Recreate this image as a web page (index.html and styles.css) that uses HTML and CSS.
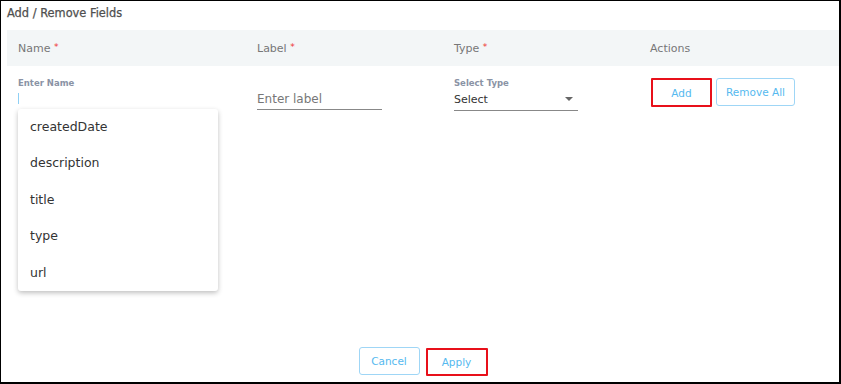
FILE: index.html
```html
<!DOCTYPE html>
<html>
<head>
    <title>Add / Remove Fields</title>
    <link rel="stylesheet" href="styles.css">
</head>
<body>
    <div class="frame">
        <div class="title">Add / Remove Fields</div>

        <div class="grid head">
            <div class="cell">Name <span class="req">*</span></div>
            <div class="cell">Label <span class="req">*</span></div>
            <div class="cell">Type <span class="req">*</span></div>
            <div class="cell">Actions</div>
        </div>

        <div class="grid row">
            <div class="cell name-cell">
                <div class="small-label">Enter Name</div>
                <div class="caret"></div>
                <ul class="menu">
                    <li>createdDate</li>
                    <li>description</li>
                    <li>title</li>
                    <li>type</li>
                    <li>url</li>
                </ul>
            </div>
            <div class="cell">
                <div class="field label-field">Enter label</div>
            </div>
            <div class="cell">
                <div class="small-label">Select Type</div>
                <div class="field select-field">
                    <span>Select</span>
                    <span class="arrow"></span>
                </div>
            </div>
            <div class="cell actions">
                <button type="button" class="btn marked add-btn">Add</button>
                <button type="button" class="btn remove-btn">Remove All</button>
            </div>
        </div>

        <div class="footer">
            <button type="button" class="btn foot-btn">Cancel</button>
            <button type="button" class="btn foot-btn marked">Apply</button>
        </div>
    </div>
</body>
</html>
```

FILE: styles.css
```css
* {
    box-sizing: border-box;
}

body {
    margin: 0;
    font-family: "DejaVu Sans", "Noto Sans", sans-serif;
    background: white;
}

.frame {
    height: 384px;
    border: 1px solid black;
    border-right-width: 2px;
    border-bottom-width: 2px;
    padding-left: 6px;
    display: flex;
    flex-direction: column;
}

.title {
    height: 29px;
    padding-top: 5px;
    font-size: 11.4px;
    color: #4f4f4f;
    -webkit-text-stroke: 0.25px #4f4f4f;
}

.grid {
    display: grid;
    grid-template-columns: 239px 197px 196px 1fr;
}

.head {
    height: 36px;
    background: #f3f6f7;
    align-items: center;
    font-size: 11px;
    color: #777;
}

.cell {
    padding-left: 11px;
}

.req {
    color: #e33;
    font-size: 9px;
    vertical-align: 2px;
}

.row {
    padding-top: 12px;
    height: 120px;
}

.name-cell {
    position: relative;
}

.small-label {
    font-size: 8.5px;
    font-weight: bold;
    color: #8a93a5;
    height: 11px;
}

.caret {
    margin-top: 4px;
    width: 1px;
    height: 11px;
    background: #8fd0f5;
}

.menu {
    position: absolute;
    left: 11px;
    top: 31px;
    width: 200px;
    margin: 0;
    padding: 0;
    list-style: none;
    background: white;
    border-radius: 3px;
    box-shadow: 0 2px 5px rgba(0, 0, 0, 0.25);
    font-size: 12.5px;
    color: #333;
    z-index: 2;
}

.menu li {
    height: 36.4px;
    line-height: 36.4px;
    padding-left: 12px;
}

.field {
    font-size: 11px;
    border-bottom: 1px solid #888;
    height: 19px;
    padding-top: 1px;
}

.label-field {
    margin-top: 13px;
    width: 125px;
    font-size: 12px;
    color: #777;
}

.select-field {
    width: 124px;
    color: #333;
    display: flex;
    justify-content: space-between;
    align-items: center;
    height: 22px;
    padding-bottom: 2px;
}

.arrow {
    width: 0;
    height: 0;
    margin-right: 5px;
    border-left: 4px solid transparent;
    border-right: 4px solid transparent;
    border-top: 4px solid #666;
}

.actions {
    display: flex;
    align-items: flex-start;
    gap: 4px;
    padding-left: 12px;
}

.btn {
    font-family: inherit;
    font-size: 10.5px;
    color: #55b9ef;
    background: white;
    border: 1px solid #9fd6f6;
    border-radius: 3px;
    height: 28px;
    padding: 0 8px;
    cursor: pointer;
}

.add-btn {
    width: 61px;
    height: 29px;
}

.remove-btn {
    width: 79px;
}

.marked {
    border: 2px solid #e8101a;
    border-radius: 1px;
}

.footer {
    margin-top: auto;
    display: flex;
    justify-content: center;
    align-items: center;
    gap: 6px;
    padding: 0 0 6px 0;
}

.foot-btn {
    width: 61px;
}

.footer .marked {
    width: 62px;
    margin-top: 2px;
}
```
